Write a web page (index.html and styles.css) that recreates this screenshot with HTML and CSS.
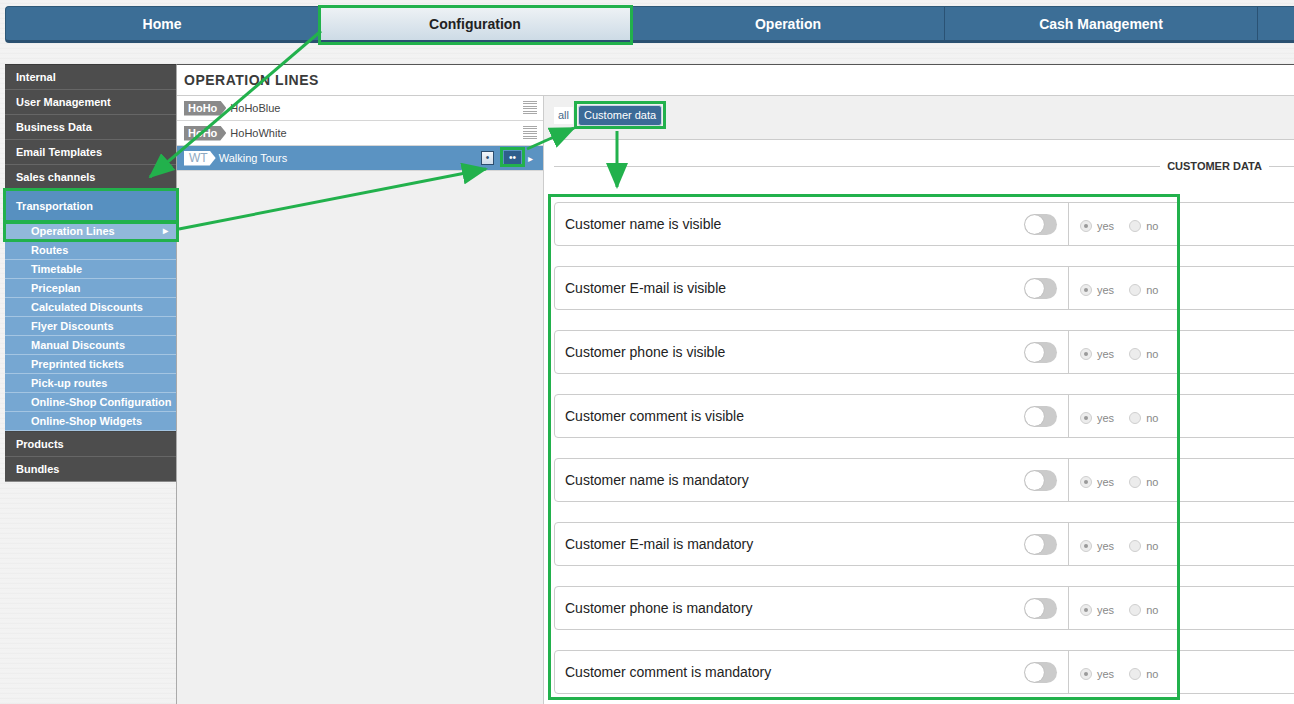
FILE: index.html
```html
<!DOCTYPE html>
<html lang="en">
<head>
    <meta charset="UTF-8">
    <meta name="viewport" content="width=device-width, initial-scale=1.0">
    <title>Operation Lines</title>
    <link rel="stylesheet" href="styles.css">
</head>
<body>
<div class="page">
    <!-- Main navigation -->
    <nav class="topnav">
        <a class="nav-item">Home</a>
        <a class="nav-item active">Configuration</a>
        <a class="nav-item">Operation</a>
        <a class="nav-item">Cash Management</a>
        <a class="nav-item"></a>
    </nav>

    <div class="layout">
        <!-- Configuration menu -->
        <ul class="sidebar">
            <li class="side-item">Internal</li>
            <li class="side-item">User Management</li>
            <li class="side-item">Business Data</li>
            <li class="side-item">Email Templates</li>
            <li class="side-item">Sales channels</li>
            <li class="side-item side-open">Transportation</li>
            <li class="side-sub current">Operation Lines</li>
            <li class="side-sub">Routes</li>
            <li class="side-sub">Timetable</li>
            <li class="side-sub">Priceplan</li>
            <li class="side-sub">Calculated Discounts</li>
            <li class="side-sub">Flyer Discounts</li>
            <li class="side-sub">Manual Discounts</li>
            <li class="side-sub">Preprinted tickets</li>
            <li class="side-sub">Pick-up routes</li>
            <li class="side-sub">Online-Shop Configuration</li>
            <li class="side-sub">Online-Shop Widgets</li>
            <li class="side-item">Products</li>
            <li class="side-item">Bundles</li>
        </ul>

        <div class="panel">
            <h1 class="panel-title">Operation Lines</h1>
            <div class="panel-body">
                <!-- Lines list -->
                <div class="lines">
                    <div class="line-row">
                        <span class="badge">HoHo</span>
                        <span class="line-name">HoHoBlue</span>
                        <span class="handle"></span>
                    </div>
                    <div class="line-row">
                        <span class="badge">HoHo</span>
                        <span class="line-name">HoHoWhite</span>
                        <span class="handle"></span>
                    </div>
                    <div class="line-row selected">
                        <span class="badge badge-light">WT</span>
                        <span class="line-name">Walking Tours</span>
                        <span class="mini-btn">&bull;</span>
                        <span class="mini-btn mini-dark">&bull;&bull;</span>
                        <span class="row-arrow">&#9656;</span>
                    </div>
                </div>

                <!-- Line details -->
                <div class="details">
                    <div class="tabs">
                        <span class="tab">all</span>
                        <span class="tab tab-active">Customer data</span>
                    </div>
                    <div class="details-content">
                        <div class="section-title">CUSTOMER DATA</div>

                        <div class="option-row">
                            <div class="option-main"><span>Customer name is visible</span><span class="toggle"></span></div>
                            <div class="option-radios"><span class="radio checked"></span><span class="radio-label">yes</span><span class="radio"></span><span class="radio-label">no</span></div>
                        </div>
                        <div class="option-row">
                            <div class="option-main"><span>Customer E-mail is visible</span><span class="toggle"></span></div>
                            <div class="option-radios"><span class="radio checked"></span><span class="radio-label">yes</span><span class="radio"></span><span class="radio-label">no</span></div>
                        </div>
                        <div class="option-row">
                            <div class="option-main"><span>Customer phone is visible</span><span class="toggle"></span></div>
                            <div class="option-radios"><span class="radio checked"></span><span class="radio-label">yes</span><span class="radio"></span><span class="radio-label">no</span></div>
                        </div>
                        <div class="option-row">
                            <div class="option-main"><span>Customer comment is visible</span><span class="toggle"></span></div>
                            <div class="option-radios"><span class="radio checked"></span><span class="radio-label">yes</span><span class="radio"></span><span class="radio-label">no</span></div>
                        </div>
                        <div class="option-row">
                            <div class="option-main"><span>Customer name is mandatory</span><span class="toggle"></span></div>
                            <div class="option-radios"><span class="radio checked"></span><span class="radio-label">yes</span><span class="radio"></span><span class="radio-label">no</span></div>
                        </div>
                        <div class="option-row">
                            <div class="option-main"><span>Customer E-mail is mandatory</span><span class="toggle"></span></div>
                            <div class="option-radios"><span class="radio checked"></span><span class="radio-label">yes</span><span class="radio"></span><span class="radio-label">no</span></div>
                        </div>
                        <div class="option-row">
                            <div class="option-main"><span>Customer phone is mandatory</span><span class="toggle"></span></div>
                            <div class="option-radios"><span class="radio checked"></span><span class="radio-label">yes</span><span class="radio"></span><span class="radio-label">no</span></div>
                        </div>
                        <div class="option-row">
                            <div class="option-main"><span>Customer comment is mandatory</span><span class="toggle"></span></div>
                            <div class="option-radios"><span class="radio checked"></span><span class="radio-label">yes</span><span class="radio"></span><span class="radio-label">no</span></div>
                        </div>
                    </div>
                </div>
            </div>
        </div>
    </div>

    <!-- Tutorial annotations drawn over the page -->
    <svg class="annotations" width="1294" height="704" viewBox="0 0 1294 704">
        <defs>
            <marker id="head" markerUnits="userSpaceOnUse" markerWidth="26" markerHeight="22" refX="24" refY="11" orient="auto">
                <path d="M0,0 L26,11 L0,22 Z" fill="#22b14c"/>
            </marker>
        </defs>
        <g fill="none" stroke="#22b14c" stroke-width="3">
            <rect x="319.5" y="6.5" width="312" height="37"/>
            <rect x="4.5" y="189.5" width="173" height="32"/>
            <rect x="4.5" y="222.5" width="173" height="18"/>
            <rect x="501.5" y="148.5" width="22" height="17"/>
            <rect x="575.5" y="102.5" width="89" height="25"/>
            <rect x="549.5" y="195.5" width="629" height="503"/>
            <line x1="321" y1="31" x2="150" y2="177" marker-end="url(#head)"/>
            <line x1="179" y1="229" x2="486" y2="169" marker-end="url(#head)"/>
            <line x1="527" y1="149" x2="574" y2="128" marker-end="url(#head)"/>
            <line x1="617" y1="131" x2="617" y2="187" marker-end="url(#head)"/>
        </g>
    </svg>
</div>
</body>
</html>
```

FILE: styles.css
```css
body {
    margin: 0;
    padding: 0;
    overflow: hidden;
    font-family: "Liberation Sans", Arial, sans-serif;
    background-color: #f3f3f3;
    background-image: repeating-linear-gradient(180deg, #f6f6f6 0, #eeeeee 1px, #f8f8f8 2px, #ebebeb 3px, #f5f5f5 5px);
}
.page {
    position: relative;
    width: 1294px;
    height: 704px;
    overflow: hidden;
}

/* top navigation */
.topnav {
    display: flex;
    width: max-content;
    margin: 6px 0 0 5px;
    height: 33px;
    background: #3c6e96;
    border-top: 1px solid #2d5878;
    border-left: 1px solid #2d5878;
    border-bottom: 3px solid #2a5070;
    border-radius: 4px 0 0 4px;
}
.nav-item {
    width: 312px;
    border-right: 1px solid #2a5274;
    text-align: center;
    line-height: 35px;
    color: white;
    font-size: 14px;
    font-weight: bold;
}
.nav-item.active {
    background: linear-gradient(#eef2f5, #cddbe6);
    color: #222;
}

.layout {
    display: flex;
    margin-top: 21px;
    height: 640px;
}

/* sidebar */
.sidebar {
    list-style: none;
    margin: 0 0 0 5px;
    padding: 0;
    width: 171px;
    flex: none;
    align-self: flex-start;
    border-top: 1px solid #3a3a3a;
    border-bottom: 1px solid #888;
}
.side-item {
    height: 24px;
    line-height: 24px;
    padding-left: 11px;
    background: #4d4d4d;
    border-bottom: 1px solid #666;
    color: white;
    font-size: 11px;
    font-weight: bold;
}
.side-item:last-child {
    border-bottom: none;
}
.side-open {
    height: 32px;
    line-height: 32px;
    border-bottom: none;
    background: #5790c0;
}
.side-sub {
    position: relative;
    height: 18px;
    line-height: 18px;
    padding-left: 26px;
    background: #76a7d2;
    border-bottom: 1px solid #a4c5e2;
    color: white;
    font-size: 11px;
    font-weight: bold;
}
.side-sub + .side-item {
    border-top: 1px solid #444;
}
.side-sub.current {
    background: #91b8da;
}
.side-sub.current::after {
    content: "\25B8";
    position: absolute;
    right: 8px;
    top: 0;
    font-size: 10px;
}

/* panel */
.panel {
    flex: 1;
    display: flex;
    flex-direction: column;
    background: white;
    border-top: 1px solid #555;
    border-left: 1px solid #aaa;
    min-width: 0;
}
.panel-title {
    margin: 0;
    height: 30px;
    line-height: 30px;
    padding-left: 7px;
    border-bottom: 1px solid #ccc;
    font-size: 14px;
    letter-spacing: 0.5px;
    text-transform: uppercase;
    color: #3a3a3a;
}
.panel-body {
    flex: 1;
    display: flex;
    min-height: 0;
}

/* lines list */
.lines {
    width: 366px;
    flex: none;
    background: #f0f0f0;
    border-right: 1px solid #ccc;
}
.line-row {
    display: flex;
    align-items: center;
    height: 24px;
    padding: 0 6px 0 7px;
    background: white;
    border-bottom: 1px solid #d6d6d6;
    font-size: 11px;
    color: #444;
}
.line-row.selected {
    background: #5b93c2;
    color: white;
}
.badge {
    height: 15px;
    line-height: 15px;
    padding: 0 9px 0 4px;
    background: #8a8a8a;
    color: white;
    font-weight: bold;
    clip-path: polygon(0 0, calc(100% - 6px) 0, 100% 50%, calc(100% - 6px) 100%, 0 100%);
}
.badge-light {
    background: white;
    color: #8fa9c2;
    font-weight: normal;
    font-size: 12px;
    padding: 0 8px 0 5px;
}
.line-name {
    margin-left: 4px;
    flex: 1;
}
.selected .line-name {
    margin-left: 3px;
}
.handle {
    width: 14px;
    height: 14px;
    background: repeating-linear-gradient(180deg, #a8a8a8 0, #a8a8a8 1px, transparent 1px, transparent 2.4px);
}
.mini-btn {
    height: 12px;
    line-height: 12px;
    width: 11px;
    text-align: center;
    font-size: 10px;
    color: #2f4f6f;
    background: linear-gradient(#f2f6fa, #cfdcea);
    border: 1px solid #2c4d6e;
    margin-left: 10px;
}
.mini-dark {
    width: 15px;
    background: #2f5e8c;
    color: white;
    border-color: #2f5e8c;
}
.row-arrow {
    margin: 0 4px 0 7px;
    font-size: 10px;
}

/* details */
.details {
    flex: 1;
    min-width: 0;
    overflow: hidden;
}
.tabs {
    display: flex;
    align-items: flex-start;
    height: 34px;
    padding: 9px 10px 0;
    background: #f0f0f0;
    border-bottom: 1px solid #ccc;
}
.tab {
    margin-top: 2px;
    padding: 0 4px;
    line-height: 17px;
    background: white;
    font-size: 11px;
    color: #4a6a8a;
}
.tab-active {
    margin: 0 0 0 5px;
    padding: 0 5px;
    line-height: 19px;
    background: #3b6a97;
    color: white;
    border: 1px solid #c9d6e3;
    border-radius: 3px;
}
.details-content {
    padding-left: 10px;
}
.section-title {
    display: flex;
    align-items: center;
    gap: 7px;
    width: 1321px;
    margin: 19px 0 29px;
    line-height: 14px;
    font-size: 11px;
    font-weight: bold;
    color: #333;
}
.section-title::before,
.section-title::after {
    content: "";
    flex: 1;
    height: 1px;
    background: #ccc;
}

.option-row {
    display: flex;
    width: 1320px;
    height: 44px;
    box-sizing: border-box;
    margin-bottom: 20px;
    border: 1px solid #ccc;
    border-radius: 4px;
}
.option-main {
    display: flex;
    align-items: center;
    justify-content: space-between;
    width: 514px;
    padding: 0 11px 0 10px;
    box-sizing: border-box;
    border-right: 1px solid #ccc;
    font-size: 14px;
    color: #222;
}
.toggle {
    position: relative;
    width: 33px;
    height: 21px;
    border-radius: 11px;
    background: #cbcbcb;
}
.toggle::after {
    content: "";
    position: absolute;
    left: 1px;
    top: 1px;
    width: 19px;
    height: 19px;
    border-radius: 50%;
    background: white;
    box-shadow: 0 0 1px rgba(0, 0, 0, 0.3);
}
.option-radios {
    display: flex;
    align-items: center;
    padding-left: 11px;
    padding-top: 4px;
    font-size: 11px;
    color: #888;
}
.radio {
    position: relative;
    width: 10px;
    height: 10px;
    border-radius: 50%;
    border: 1px solid #cfcfcf;
    background: #ececec;
}
.radio.checked::after {
    content: "";
    position: absolute;
    left: 3px;
    top: 3px;
    width: 4px;
    height: 4px;
    border-radius: 50%;
    background: #9a9a9a;
}
.radio-label {
    margin: 0 15px 0 5px;
}

.annotations {
    position: absolute;
    left: 0;
    top: 0;
    pointer-events: none;
}
```
